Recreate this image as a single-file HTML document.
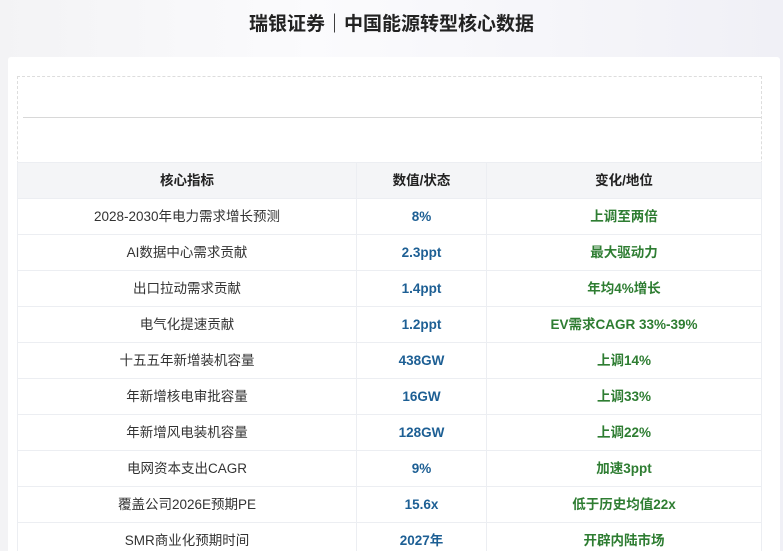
<!DOCTYPE html>
<html><head><meta charset="utf-8"><style>
*{margin:0;padding:0;box-sizing:border-box}
html,body{width:783px;height:551px;overflow:hidden}
body{background:linear-gradient(90deg,#f3f3f5,#fbfbfd 40%,#f0f0f6);font-family:"Liberation Sans","Noto Sans CJK SC",sans-serif;position:relative}
.title{position:absolute;top:0;left:0;width:783px;height:52px;line-height:50px;text-align:center;font-size:19px;font-weight:bold;color:#222}
.card{position:absolute;left:8px;top:57px;width:772px;height:500px;background:#fff;border-radius:3px}
.box{position:absolute;left:17px;top:76px;width:745px;height:500px;border:1px dashed #ddd;border-bottom:none;background:#fff}
.line1{position:absolute;left:23px;top:117px;width:738px;border-top:1px solid #d8d8d8}
.line2{position:absolute;left:17px;top:162px;width:745px;border-top:1px solid #d8d8d8}
table{position:absolute;left:17px;top:162px;width:745px;border-collapse:collapse;font-size:13.5px}
td,th{height:36px;padding:0;line-height:34px;vertical-align:middle;text-align:center;border:1px solid #eceef2;color:#333;font-weight:normal}
td span,th span{display:inline-block;line-height:20px;vertical-align:middle}
th{background:#f4f5f7;font-weight:bold;color:#222}
td:nth-child(2){color:#1d5f94;font-weight:bold}
td:nth-child(3){color:#2e7d32;font-weight:bold}
</style></head><body>
<div class="title">瑞银证券｜中国能源转型核心数据</div>
<div class="card"></div>
<div class="box"></div>
<div class="line1"></div>
<div class="line2"></div>
<table>
<colgroup><col style="width:339px"><col style="width:130px"><col></colgroup>
<tr><th><span>核心指标</span></th><th><span>数值/状态</span></th><th><span>变化/地位</span></th></tr>
<tr><td><span>2028-2030年电力需求增长预测</span></td><td><span>8%</span></td><td><span>上调至两倍</span></td></tr>
<tr><td><span>AI数据中心需求贡献</span></td><td><span>2.3ppt</span></td><td><span>最大驱动力</span></td></tr>
<tr><td><span>出口拉动需求贡献</span></td><td><span>1.4ppt</span></td><td><span>年均4%增长</span></td></tr>
<tr><td><span>电气化提速贡献</span></td><td><span>1.2ppt</span></td><td><span>EV需求CAGR 33%-39%</span></td></tr>
<tr><td><span>十五五年新增装机容量</span></td><td><span>438GW</span></td><td><span>上调14%</span></td></tr>
<tr><td><span>年新增核电审批容量</span></td><td><span>16GW</span></td><td><span>上调33%</span></td></tr>
<tr><td><span>年新增风电装机容量</span></td><td><span>128GW</span></td><td><span>上调22%</span></td></tr>
<tr><td><span>电网资本支出CAGR</span></td><td><span>9%</span></td><td><span>加速3ppt</span></td></tr>
<tr><td><span>覆盖公司2026E预期PE</span></td><td><span>15.6x</span></td><td><span>低于历史均值22x</span></td></tr>
<tr><td><span>SMR商业化预期时间</span></td><td><span>2027年</span></td><td><span>开辟内陆市场</span></td></tr>
</table>
</body></html>
